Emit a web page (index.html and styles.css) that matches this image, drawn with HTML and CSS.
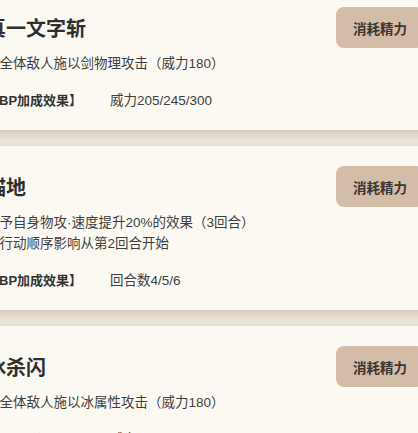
FILE: index.html
```html
<!DOCTYPE html>
<html lang="zh-CN">
<head>
  <meta charset="UTF-8">
  <meta name="viewport" content="width=device-width, initial-scale=1.0">
  <title>技能列表</title>
  <link rel="stylesheet" href="styles.css">
</head>
<body>
  <div class="skill-list">
    <!-- 技能 1 -->
    <div class="skill-card">
      <div class="skill-head">
        <h2 class="skill-name">真一文字斩</h2>
        <button class="cost-btn">消耗精力</button>
      </div>
      <p class="skill-desc">对全体敌人施以剑物理攻击（威力180）</p>
      <div class="skill-bp">
        <span class="bp-label">【BP加成效果】</span>
        <span class="bp-value">威力205/245/300</span>
      </div>
    </div>

    <!-- 技能 2 -->
    <div class="skill-card">
      <div class="skill-head">
        <h2 class="skill-name">锚地</h2>
        <button class="cost-btn">消耗精力</button>
      </div>
      <p class="skill-desc">给予自身物攻·速度提升20%的效果（3回合）<br>受行动顺序影响从第2回合开始</p>
      <div class="skill-bp">
        <span class="bp-label">【BP加成效果】</span>
        <span class="bp-value">回合数4/5/6</span>
      </div>
    </div>

    <!-- 技能 3 -->
    <div class="skill-card">
      <div class="skill-head">
        <h2 class="skill-name">冰杀闪</h2>
        <button class="cost-btn">消耗精力</button>
      </div>
      <p class="skill-desc">对全体敌人施以冰属性攻击（威力180）</p>
      <div class="skill-bp">
        <span class="bp-label">【BP加成效果】</span>
        <span class="bp-value">威力205/245/300</span>
      </div>
    </div>
  </div>
</body>
</html>
```
FILE: styles.css
```css
* {
  box-sizing: border-box;
}

body {
  margin: 0;
  font-family: "Liberation Sans", "Noto Sans CJK SC", sans-serif;
  background-color: #ebe4d9;
  overflow: hidden;
}

.skill-list {
  width: 478px;
  margin: -13px 0 0 -34px;
}

.skill-card {
  background: #fcf9f3;
  padding: 20px 20px 19px;
  margin-bottom: 16px;
  box-shadow: 0 4px 8px rgba(90, 70, 40, 0.18);
}

.skill-head {
  display: flex;
  justify-content: space-between;
  align-items: center;
  height: 41px;
}

.skill-name {
  margin: 0;
  font-size: 20px;
  font-weight: bold;
  color: #2f2f2f;
}

.cost-btn {
  width: 88px;
  height: 41px;
  border: none;
  border-radius: 8px;
  background-color: #d3bca8;
  color: #3b3631;
  font-family: inherit;
  font-size: 13.5px;
  font-weight: bold;
  cursor: pointer;
}

.skill-desc {
  margin: 5px 0 0;
  font-size: 13.5px;
  line-height: 21px;
  color: #3f3f3f;
}

.skill-bp {
  display: flex;
  margin-top: 16px;
  font-size: 13.5px;
  line-height: 21px;
  color: #3f3f3f;
}

.bp-label {
  width: 124px;
  font-size: 13px;
  font-weight: bold;
  color: #333;
}
```
